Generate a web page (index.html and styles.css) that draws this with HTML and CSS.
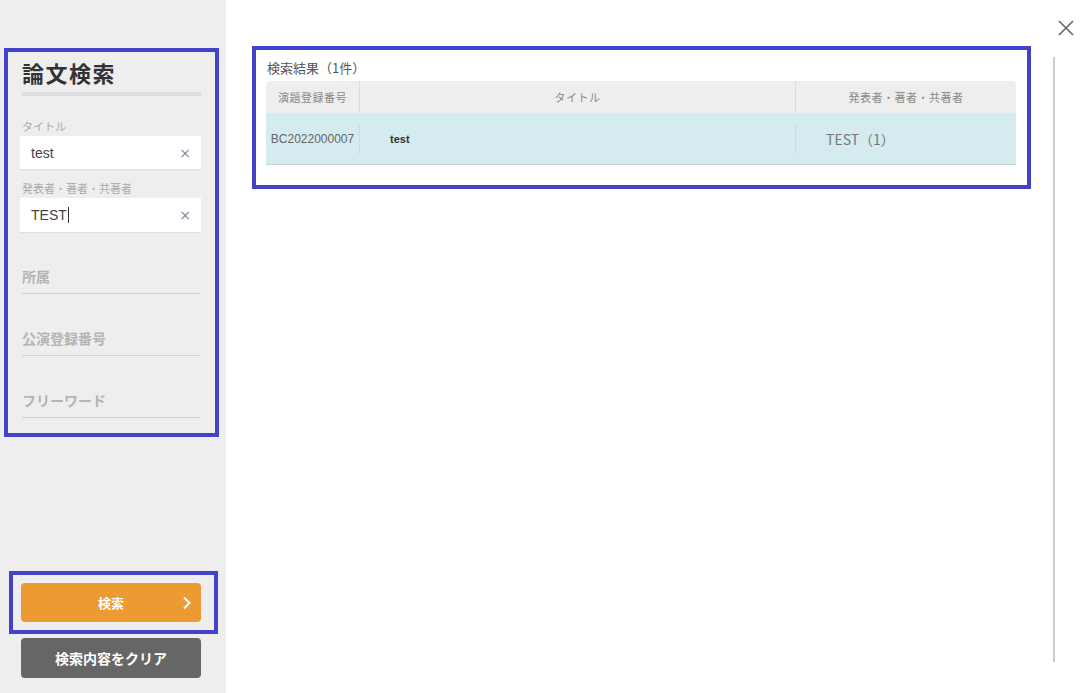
FILE: index.html
```html
<!DOCTYPE html>
<html lang="ja">
<head>
<meta charset="utf-8">
<title>論文検索</title>
<link rel="stylesheet" href="styles.css">
</head>
<body>
<div class="page">
  <aside class="sidebar">
    <div class="search-box">
      <h1 class="title">論文検索</h1>
      <div class="title-bar"></div>
      <div class="label label-first">タイトル</div>
      <div class="input">
        <span class="input-text">test</span>
        <span class="clear-x">×</span>
      </div>
      <div class="label">発表者・著者・共著者</div>
      <div class="input input-2">
        <span class="input-text">TEST<span class="caret"></span></span>
        <span class="clear-x">×</span>
      </div>
      <div class="field">所属</div>
      <div class="field">公演登録番号</div>
      <div class="field">フリーワード</div>
    </div>
    <div class="spacer"></div>
    <div class="btn-box">
      <button class="btn btn-search">検索<span class="chev"><svg width="10" height="14" viewBox="0 0 10 14"><path d="M2 1.5 L7.5 7 L2 12.5" fill="none" stroke="#fff" stroke-width="2"/></svg></span></button>
    </div>
    <button class="btn btn-clear">検索内容をクリア</button>
  </aside>
  <main class="main">
    <section class="results">
      <div class="results-title">検索結果（1件）</div>
      <div class="table">
        <div class="thead">
          <div class="th c1">演題登録番号</div>
          <div class="th c2">タイトル</div>
          <div class="th c3">発表者・著者・共著者</div>
        </div>
        <div class="trow">
          <div class="td c1">BC2022000007</div>
          <div class="td c2 td-title">test</div>
          <div class="td c3 td-author">TEST（1）</div>
        </div>
      </div>
    </section>
    <div class="scroll-line"></div>
    <button class="close" aria-label="close"><svg width="16" height="16" viewBox="0 0 16 16"><path d="M1 1 L15 15 M15 1 L1 15" stroke="#666" stroke-width="1.6" fill="none"/></svg></button>
  </main>
</div>
</body>
</html>
```
FILE: styles.css
```css
* { box-sizing: border-box; }
html, body { margin: 0; padding: 0; }
body {
  font-family: "Noto Sans CJK JP", "Liberation Sans", sans-serif;
  background: #fff;
  color: #333;
}
.page {
  display: flex;
  width: 1088px;
  height: 693px;
  overflow: hidden;
}
.sidebar {
  width: 226px;
  flex: none;
  background: #eeeeee;
  display: flex;
  flex-direction: column;
  padding: 48px 7px 15px 4px;
}
.search-box {
  border: 4px solid #4343c9;
  padding: 6px 14px 15px 12px;
}
.title {
  margin: 0 0 0 2px;
  font-size: 22px;
  line-height: 28px;
  font-weight: 700;
  color: #333;
  letter-spacing: 1.5px;
}
.title-bar {
  margin: 6px 0 0 2px;
  height: 4px;
  background: #dedede;
}
.label {
  margin: 11px 0 2px 2px;
  font-size: 11px;
  line-height: 16px;
  color: #aaa;
}
.label-first { margin-top: 22px; }
.input {
  height: 33px;
  background: #fff;
  display: flex;
  align-items: center;
  justify-content: space-between;
  padding: 0 10px 0 11px;
  box-shadow: 0 1px 1px rgba(0,0,0,0.06);
}
.input-2 { height: 34px; }
.input-text {
  font-family: "Liberation Sans", "Noto Sans CJK JP", sans-serif;
  font-size: 14px;
  color: #444;
  display: flex;
  align-items: center;
}
.caret {
  display: inline-block;
  width: 1px;
  height: 16px;
  background: #333;
  margin-left: 1px;
}
.clear-x {
  font-family: "DejaVu Sans", sans-serif;
  font-size: 14px;
  color: #888;
}
.field {
  margin-left: 2px;
  padding: 34px 0 7px;
  line-height: 20px;
  font-size: 14px;
  font-weight: 700;
  color: #b4b4b4;
  border-bottom: 1px solid #d2d2d2;
}
.spacer { flex: 1; }
.btn-box {
  margin-left: 5px;
  margin-right: 1px;
  border: 4px solid #4343c9;
  padding: 8px 10px 8px 8px;
}
.btn {
  display: flex;
  align-items: center;
  justify-content: center;
  width: 180px;
  border: none;
  border-radius: 4px;
  color: #fff;
  font-family: "Noto Sans CJK JP", sans-serif;
  font-weight: 700;
  cursor: pointer;
  padding: 0;
}
.btn-search {
  position: relative;
  height: 39px;
  background: #ec9a32;
  font-size: 13px;
}
.chev {
  position: absolute;
  right: 9px;
  top: 13px;
  display: flex;
}
.btn-clear {
  margin: 4px 0 0 17px;
  height: 40px;
  background: #666;
  font-size: 14px;
}
.main {
  flex: 1;
  position: relative;
  display: flex;
  align-items: flex-start;
  padding: 46px 0 0 26px;
}
.results {
  width: 779px;
  border: 4px solid #4343c9;
  padding: 8px 11px 20px 10px;
}
.results-title {
  font-size: 13px;
  line-height: 20px;
  color: #555;
  margin-left: 1px;
  font-weight: 400;
}
.table { margin-top: 3px; }
.thead {
  display: flex;
  height: 32px;
  background: #eeeeee;
  border-radius: 4px 4px 0 0;
}
.th {
  display: flex;
  align-items: center;
  justify-content: center;
  font-size: 11px;
  color: #888;
  letter-spacing: 0.5px;
}
.c1 { width: 94px; }
.c2 { width: 436px; }
.c3 { flex: 1; }
.thead .c1, .thead .c2 { border-right: 1px solid #dadada; }
.trow {
  display: flex;
  align-items: center;
  height: 52px;
  background: #d4ebf0;
  border-bottom: 1px solid #cfcfcf;
}
.td {
  height: 30px;
  display: flex;
  align-items: center;
  font-size: 12px;
  color: #666;
}
.trow .c1 {
  justify-content: center;
  border-right: 1px solid #c6dde2;
  font-family: "Liberation Sans", sans-serif;
}
.trow .c2 { border-right: 1px solid #c6dde2; }
.td-title {
  padding-left: 30px;
  font-family: "Liberation Sans", sans-serif;
  font-weight: 700;
  font-size: 11px;
  color: #333;
}
.td-author {
  padding-left: 30px;
  font-size: 14px;
  color: #777;
}
.scroll-line {
  margin: 11px 0 0 22px;
  width: 2px;
  height: 605px;
  background: #cccccc;
}
.close {
  position: absolute;
  top: 20px;
  right: 14px;
  border: none;
  background: none;
  padding: 0;
  display: flex;
  cursor: pointer;
}
```
